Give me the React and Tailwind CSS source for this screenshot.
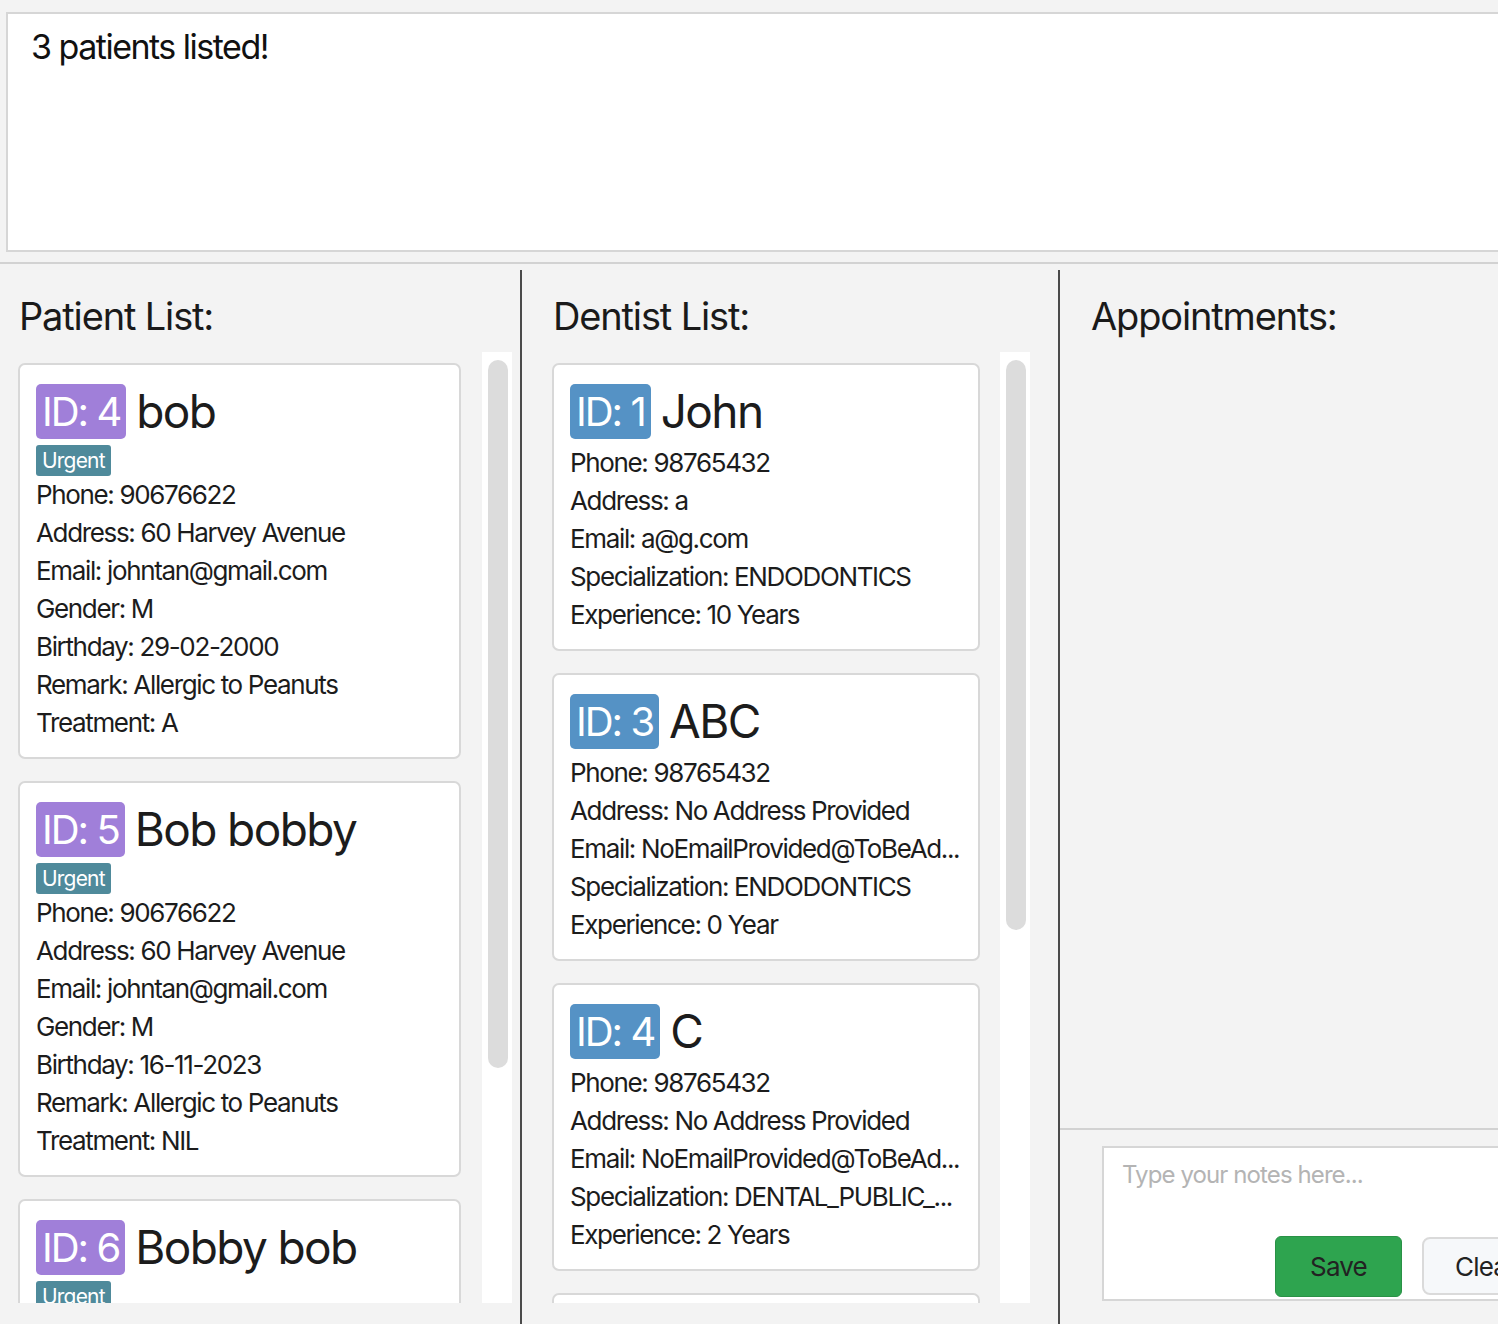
import React from "react";

const patients = [
  {
    id: 4,
    name: "bob",
    tag: "Urgent",
    lines: [
      "Phone: 90676622",
      "Address: 60 Harvey Avenue",
      "Email: johntan@gmail.com",
      "Gender: M",
      "Birthday: 29-02-2000",
      "Remark: Allergic to Peanuts",
      "Treatment: A",
    ],
  },
  {
    id: 5,
    name: "Bob bobby",
    tag: "Urgent",
    lines: [
      "Phone: 90676622",
      "Address: 60 Harvey Avenue",
      "Email: johntan@gmail.com",
      "Gender: M",
      "Birthday: 16-11-2023",
      "Remark: Allergic to Peanuts",
      "Treatment: NIL",
    ],
  },
  {
    id: 6,
    name: "Bobby bob",
    tag: "Urgent",
    lines: [
      "Phone: 90676622",
      "Address: 60 Harvey Avenue",
      "Email: johntan@gmail.com",
      "Gender: M",
      "Birthday: 16-11-2023",
      "Remark: Allergic to Peanuts",
      "Treatment: NIL",
    ],
  },
];

const dentists = [
  {
    id: 1,
    name: "John",
    lines: [
      "Phone: 98765432",
      "Address: a",
      "Email: a@g.com",
      "Specialization: ENDODONTICS",
      "Experience: 10 Years",
    ],
  },
  {
    id: 3,
    name: "ABC",
    lines: [
      "Phone: 98765432",
      "Address: No Address Provided",
      "Email: NoEmailProvided@ToBeAd...",
      "Specialization: ENDODONTICS",
      "Experience: 0 Year",
    ],
  },
  {
    id: 4,
    name: "C",
    lines: [
      "Phone: 98765432",
      "Address: No Address Provided",
      "Email: NoEmailProvided@ToBeAd...",
      "Specialization: DENTAL_PUBLIC_...",
      "Experience: 2 Years",
    ],
  },
  {
    id: 7,
    name: "D",
    lines: ["Phone: 98765432"],
  },
];

function Card({ person, badgeClass }) {
  return (
    <div className="shrink-0 rounded-[7px] border-2 border-[#d8d8d8] bg-white pl-4 pr-4 pt-[19px] pb-[15px]">
      <div className="flex h-[55px] items-center gap-[10px]">
        <span
          className={`flex h-[55px] items-center rounded-[5px] px-[6px] text-[40px] tracking-[-2px] text-white ${badgeClass}`}
        >
          ID: {person.id}
        </span>
        <span className="text-[46px] tracking-[-1.6px] text-[#1c1c1c]">
          {person.name}
        </span>
      </div>
      {person.tag && (
        <div className="mt-[6px] flex">
          <span className="flex h-[31px] items-center rounded-[3px] bg-[#4f8a9b] px-[6px] text-[21px] tracking-[-0.8px] text-white">
            {person.tag}
          </span>
        </div>
      )}
      <div className={person.tag ? "" : "mt-[5px]"}>
        {person.lines.map((line) => (
          <div
            key={line}
            className="h-[38px] overflow-hidden whitespace-nowrap text-[26px] leading-[38px] tracking-[-1.35px] text-[#1c1c1c]"
          >
            {line}
          </div>
        ))}
      </div>
    </div>
  );
}

function Scrollbar({ thumbHeight }) {
  return (
    <div className="w-[30px] shrink-0 bg-white px-[6px] pt-2">
      <div className={`w-[20px] rounded-full bg-[#dcdcdc] ${thumbHeight}`} />
    </div>
  );
}

export default function App() {
  return (
    <div className="h-[1324px] w-full overflow-hidden bg-[#f3f3f3] font-['Inter',sans-serif]">
      {/* result display */}
      <div className="h-[262px] pl-[6px] pt-3">
        <div className="-mr-10 h-[240px] border-2 border-[#d6d6d6] bg-white pl-[23px] pt-[13px] text-[34px] leading-[40px] tracking-[-1.5px] text-[#111]">
          3 patients listed!
        </div>
      </div>
      <div className="h-[2px] bg-[#d2d2d2]" />

      <div className="flex h-[1060px] pt-[6px]">
        {/* Patient column */}
        <div className="flex w-[520px] shrink-0 flex-col pl-[18px] pr-2 pt-[24px] pb-[21px]">
          <h2 className="pl-[1px] text-[38px] leading-[44px] tracking-[-1.15px] text-[#1a1a1a]">
            Patient List:
          </h2>
          <div className="mt-[14px] flex min-h-0 flex-1 gap-[21px]">
            <div className="flex w-[443px] flex-col gap-[22px] overflow-hidden pt-[11px]">
              {patients.map((p) => (
                <Card key={p.id} person={p} badgeClass="bg-[#a07fd9]" />
              ))}
            </div>
            <Scrollbar thumbHeight="h-[708px]" />
          </div>
        </div>

        <div className="w-[2px] shrink-0 bg-[#4a4a4a]" />

        {/* Dentist column */}
        <div className="flex w-[536px] shrink-0 flex-col pl-[30px] pr-[28px] pt-[24px] pb-[21px]">
          <h2 className="pl-[1px] text-[38px] leading-[44px] tracking-[-1.15px] text-[#1a1a1a]">
            Dentist List:
          </h2>
          <div className="mt-[14px] flex min-h-0 flex-1 gap-[20px]">
            <div className="flex w-[428px] flex-col gap-[22px] overflow-hidden pt-[11px]">
              {dentists.map((d) => (
                <Card key={d.id} person={d} badgeClass="bg-[#5592c5]" />
              ))}
            </div>
            <Scrollbar thumbHeight="h-[570px]" />
          </div>
        </div>

        <div className="w-[2px] shrink-0 bg-[#4a4a4a]" />

        {/* Appointments column */}
        <div className="flex min-w-0 flex-1 flex-col pt-[24px]">
          <h2 className="pl-[31px] text-[38px] leading-[44px] tracking-[-1.15px] text-[#1a1a1a]">
            Appointments:
          </h2>
          <div className="flex-1" />
          <div className="h-[2px] bg-[#d2d2d2]" />
          <div className="pl-[42px] pt-4 pb-[23px]">
            <div className="-mr-40 flex h-[155px] flex-col border-2 border-[#d6d6d6] bg-white">
              <div className="h-[88px] pl-[18px] pt-[10px] text-[24px] leading-[34px] tracking-[-0.9px] text-[#b4b4b4]">
                Type your notes here...
              </div>
              <div className="flex gap-5 pl-[171px]">
                <button className="h-[61px] w-[127px] rounded-[6px] border border-[#2a9146] bg-[#2ea44f] text-[26px] tracking-[-0.8px] text-[#222]">
                  Save
                </button>
                <button className="mt-[1px] h-[58px] w-[127px] rounded-[8px] border-2 border-[#dadada] bg-[#f6f8fa] text-[26px] tracking-[-0.8px] text-[#222]">
                  Clear
                </button>
              </div>
            </div>
          </div>
        </div>
      </div>
    </div>
  );
}
